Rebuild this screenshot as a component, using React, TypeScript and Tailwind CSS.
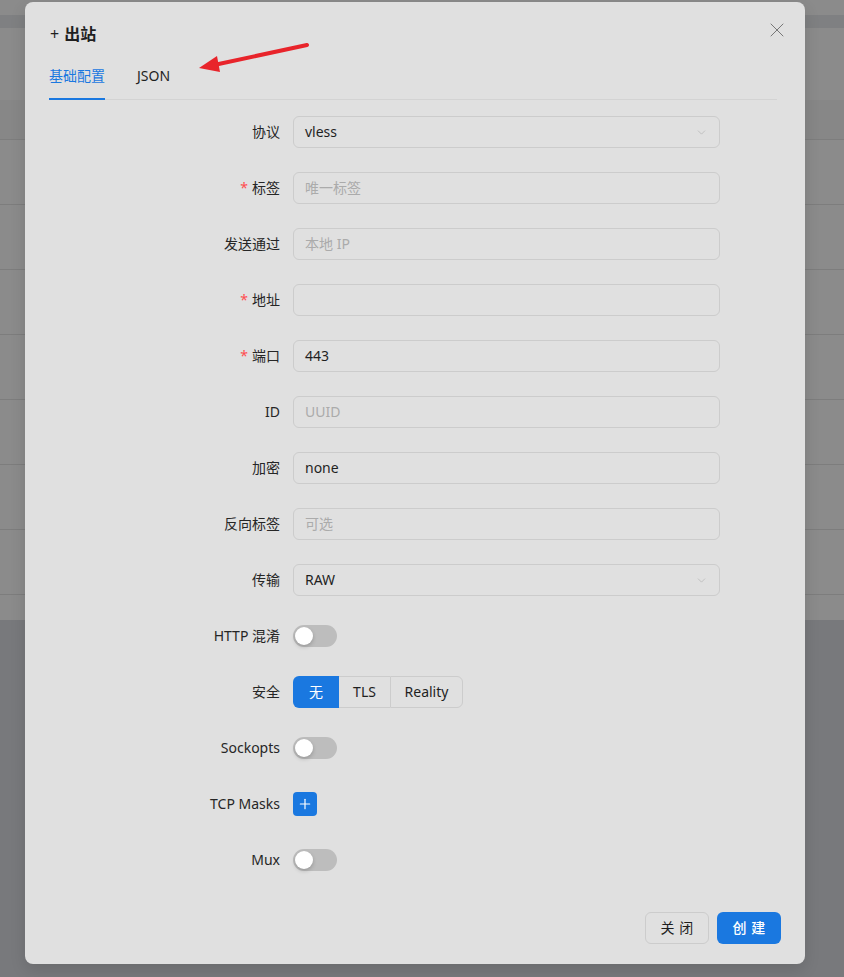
import { ChevronDown, Plus, X } from 'lucide-react';

type Field = {
  label: string;
  required?: boolean;
  kind: 'input' | 'select' | 'switch' | 'security' | 'add';
  value?: string;
  placeholder?: string;
};

const fields: Field[] = [
  { label: '协议', kind: 'select', value: 'vless' },
  { label: '标签', required: true, kind: 'input', placeholder: '唯一标签' },
  { label: '发送通过', kind: 'input', placeholder: '本地 IP' },
  { label: '地址', required: true, kind: 'input' },
  { label: '端口', required: true, kind: 'input', value: '443' },
  { label: 'ID', kind: 'input', placeholder: 'UUID' },
  { label: '加密', kind: 'input', value: 'none' },
  { label: '反向标签', kind: 'input', placeholder: '可选' },
  { label: '传输', kind: 'select', value: 'RAW' },
  { label: 'HTTP 混淆', kind: 'switch' },
  { label: '安全', kind: 'security' },
  { label: 'Sockopts', kind: 'switch' },
  { label: 'TCP Masks', kind: 'add' },
  { label: 'Mux', kind: 'switch' },
];

function Toggle() {
  return (
    <div className="flex h-[22px] w-11 items-center rounded-full bg-[#bdbdbd] px-[2px]">
      <span className="h-[18px] w-[18px] rounded-full bg-white shadow-[0_2px_4px_rgba(0,0,0,0.2)]" />
    </div>
  );
}

function Control({ field }: { field: Field }) {
  if (field.kind === 'switch') return <Toggle />;

  if (field.kind === 'add') {
    return (
      <button className="flex h-6 w-6 items-center justify-center rounded-[4px] bg-[#1a78e0] text-white">
        <Plus size={16} strokeWidth={1.8} />
      </button>
    );
  }

  if (field.kind === 'security') {
    return (
      <div className="flex h-8 text-sm">
        <span className="flex w-[46px] items-center justify-center rounded-l-md bg-[#1a78e0] text-white">无</span>
        <span className="flex w-[51px] items-center justify-center border-y border-[#cccccc] text-[#1f1f1f]">TLS</span>
        <span className="flex w-[73px] items-center justify-center rounded-r-md border border-[#cccccc] text-[#1f1f1f]">Reality</span>
      </div>
    );
  }

  return (
    <div className="flex h-8 items-center justify-between rounded-md border border-[#cccccc] px-[11px] text-sm">
      {field.value ? (
        <span className="text-[#1f1f1f]">{field.value}</span>
      ) : (
        <span className="text-[#ababab]">{field.placeholder}</span>
      )}
      {field.kind === 'select' && <ChevronDown size={13} strokeWidth={1.3} className="text-[#b3b3b3]" />}
    </div>
  );
}

export default function App() {
  return (
    <div
      className="relative h-[977px] overflow-hidden bg-[#78797c]"
      style={{ fontFamily: '"Noto Sans", "Noto Sans CJK SC", sans-serif' }}
    >
      {/* page behind the mask */}
      <div className="h-[620px] bg-[#8b8b8b]">
        <div className="h-[15px]" />
        <div className="h-[13px] bg-[#7f8082]" />
        <div className="h-[72px]" />
        <div className="h-[40px] border-b border-[#7d7d7d] bg-[#878787]" />
        {Array.from({ length: 7 }).map((_, i) => (
          <div key={i} className="h-[65px] border-b border-[#7d7d7d]" />
        ))}
      </div>

      {/* outbound modal */}
      <div className="absolute left-[25px] top-[2px] w-[780px] rounded-lg bg-[#e0e0e0] px-6 pb-5 pt-5 shadow-[0_6px_16px_rgba(0,0,0,0.12)]">
        <button className="absolute right-4 top-4 flex h-6 w-6 items-center justify-center text-[#777777]">
          <X size={24} strokeWidth={1} />
        </button>

        <div className="flex h-6 items-center text-base text-[#1f1f1f]">
          <span className="ml-[1px] mr-[5px]">+</span>
          <span className="font-bold">出站</span>
        </div>

        <div className="mr-1 mt-[7px] flex border-b border-[#d3d3d3] text-sm">
          <div className="relative py-3 leading-[22px] text-[#1a78e0]">
            基础配置
            <span className="absolute bottom-[-1px] left-0 h-[2px] w-full bg-[#1a78e0]" />
          </div>
          <div className="ml-8 py-3 leading-[22px] text-[#1f1f1f]">JSON</div>
        </div>

        <div className="mt-4 flex flex-col gap-6">
          {fields.map((f) => (
            <div key={f.label} className="grid h-8 grid-cols-[244px_427px] items-center">
              <div className="pr-[13px] text-right text-sm text-[#262626]">
                {f.required && <span className="mr-1 text-[#ff4d4f]">*</span>}
                {f.label}
              </div>
              <div>
                <Control field={f} />
              </div>
            </div>
          ))}
        </div>

        <div className="mt-9 flex justify-end gap-2 text-sm">
          <button className="h-8 w-16 rounded-md border border-[#cccccc] text-[#1f1f1f]">
            <span className="mr-[-0.34em] tracking-[0.34em]">关闭</span>
          </button>
          <button className="h-8 w-16 rounded-md bg-[#1a78e0] font-medium text-white">
            <span className="mr-[-0.34em] tracking-[0.34em]">创建</span>
          </button>
        </div>
      </div>

      {/* annotation arrow */}
      <svg className="pointer-events-none absolute left-0 top-0" width="844" height="977">
        <line x1="307" y1="45" x2="214" y2="65" stroke="#e8242b" strokeWidth="4" strokeLinecap="round" />
        <polygon points="199,68 217,56 220,72" fill="#e8242b" />
      </svg>
    </div>
  );
}
